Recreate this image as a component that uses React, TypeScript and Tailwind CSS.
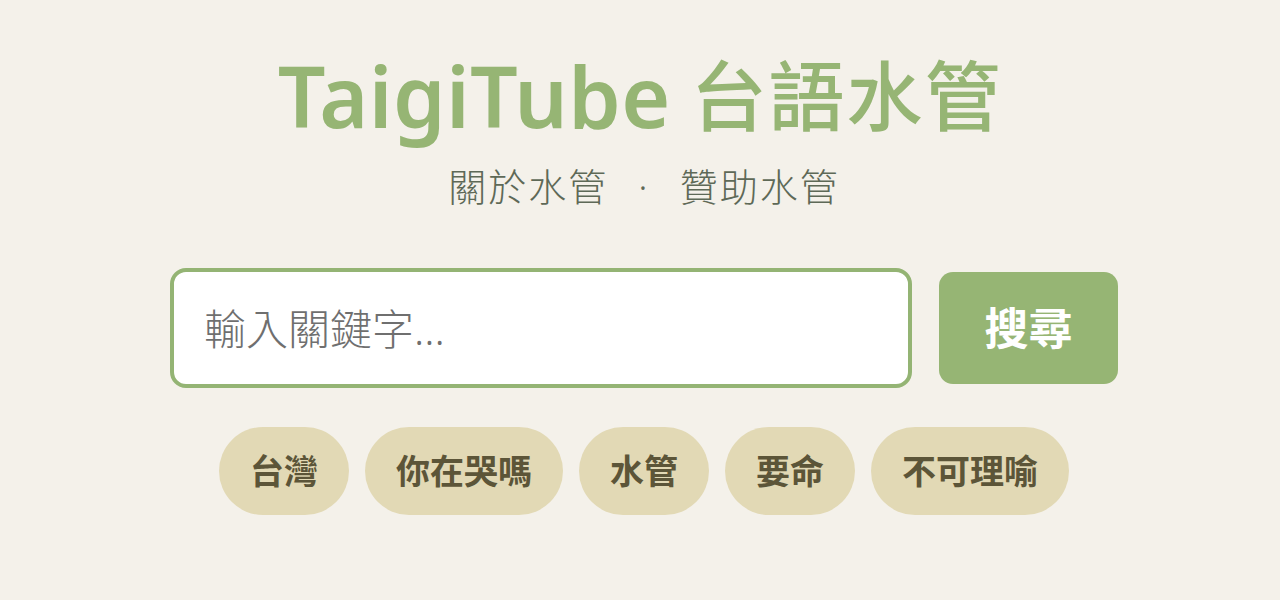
import React, { useState } from 'react';

const tags = ['台灣', '你在哭嗎', '水管', '要命', '不可理喻'];

const App = () => {
    const [query, setQuery] = useState('');

    return (
        <div
            className="min-h-[600px] w-full bg-[#f4f1ea] pt-[50px]"
            style={{ fontFamily: '"Noto Sans", "Noto Sans CJK TC", sans-serif' }}
        >
            <div className="ml-[170px] flex w-[948px] flex-col items-center">
                {/* Title */}
                <h1 className="-ml-[8px] flex h-[92px] items-center whitespace-nowrap text-[#96b574]">
                    <span className="text-[84px] font-semibold leading-none tracking-[0.005em]">TaigiTube</span>
                    <span className="ml-[20px] text-[76px] font-medium leading-none tracking-[0.025em]">台語水管</span>
                </h1>

                {/* Links */}
                <div className="mt-[25px] flex items-center text-[38px] font-light leading-none tracking-[2px] text-[#5e6957]">
                    <a href="#" className="hover:underline">關於水管</a>
                    <span className="mx-[30px]">·</span>
                    <a href="#" className="hover:underline">贊助水管</a>
                </div>

                {/* Search */}
                <div className="mt-[63px] flex w-full items-center gap-[27px]">
                    <input
                        type="text"
                        value={query}
                        onChange={(e) => setQuery(e.target.value)}
                        placeholder="輸入關鍵字..."
                        className="h-[120px] flex-1 rounded-[16px] border-[4px] border-[#94b474] bg-white px-[30px] text-[42px] font-light text-[#444] outline-none placeholder:text-[#6f6f6f]"
                    />
                    <button className="h-[112px] w-[179px] rounded-[14px] bg-[#96b574] text-[44px] font-bold text-white hover:bg-[#88a866]">
                        搜尋
                    </button>
                </div>

                {/* Tags */}
                <div className="mt-[39px] flex items-center gap-[16px]">
                    {tags.map((tag) => (
                        <button
                            key={tag}
                            className="flex h-[88px] items-center rounded-full bg-[#e2d9b5] px-[31px] text-[34px] font-semibold text-[#5c5538]"
                        >
                            {tag}
                        </button>
                    ))}
                </div>
            </div>
        </div>
    );
};

export default App;
